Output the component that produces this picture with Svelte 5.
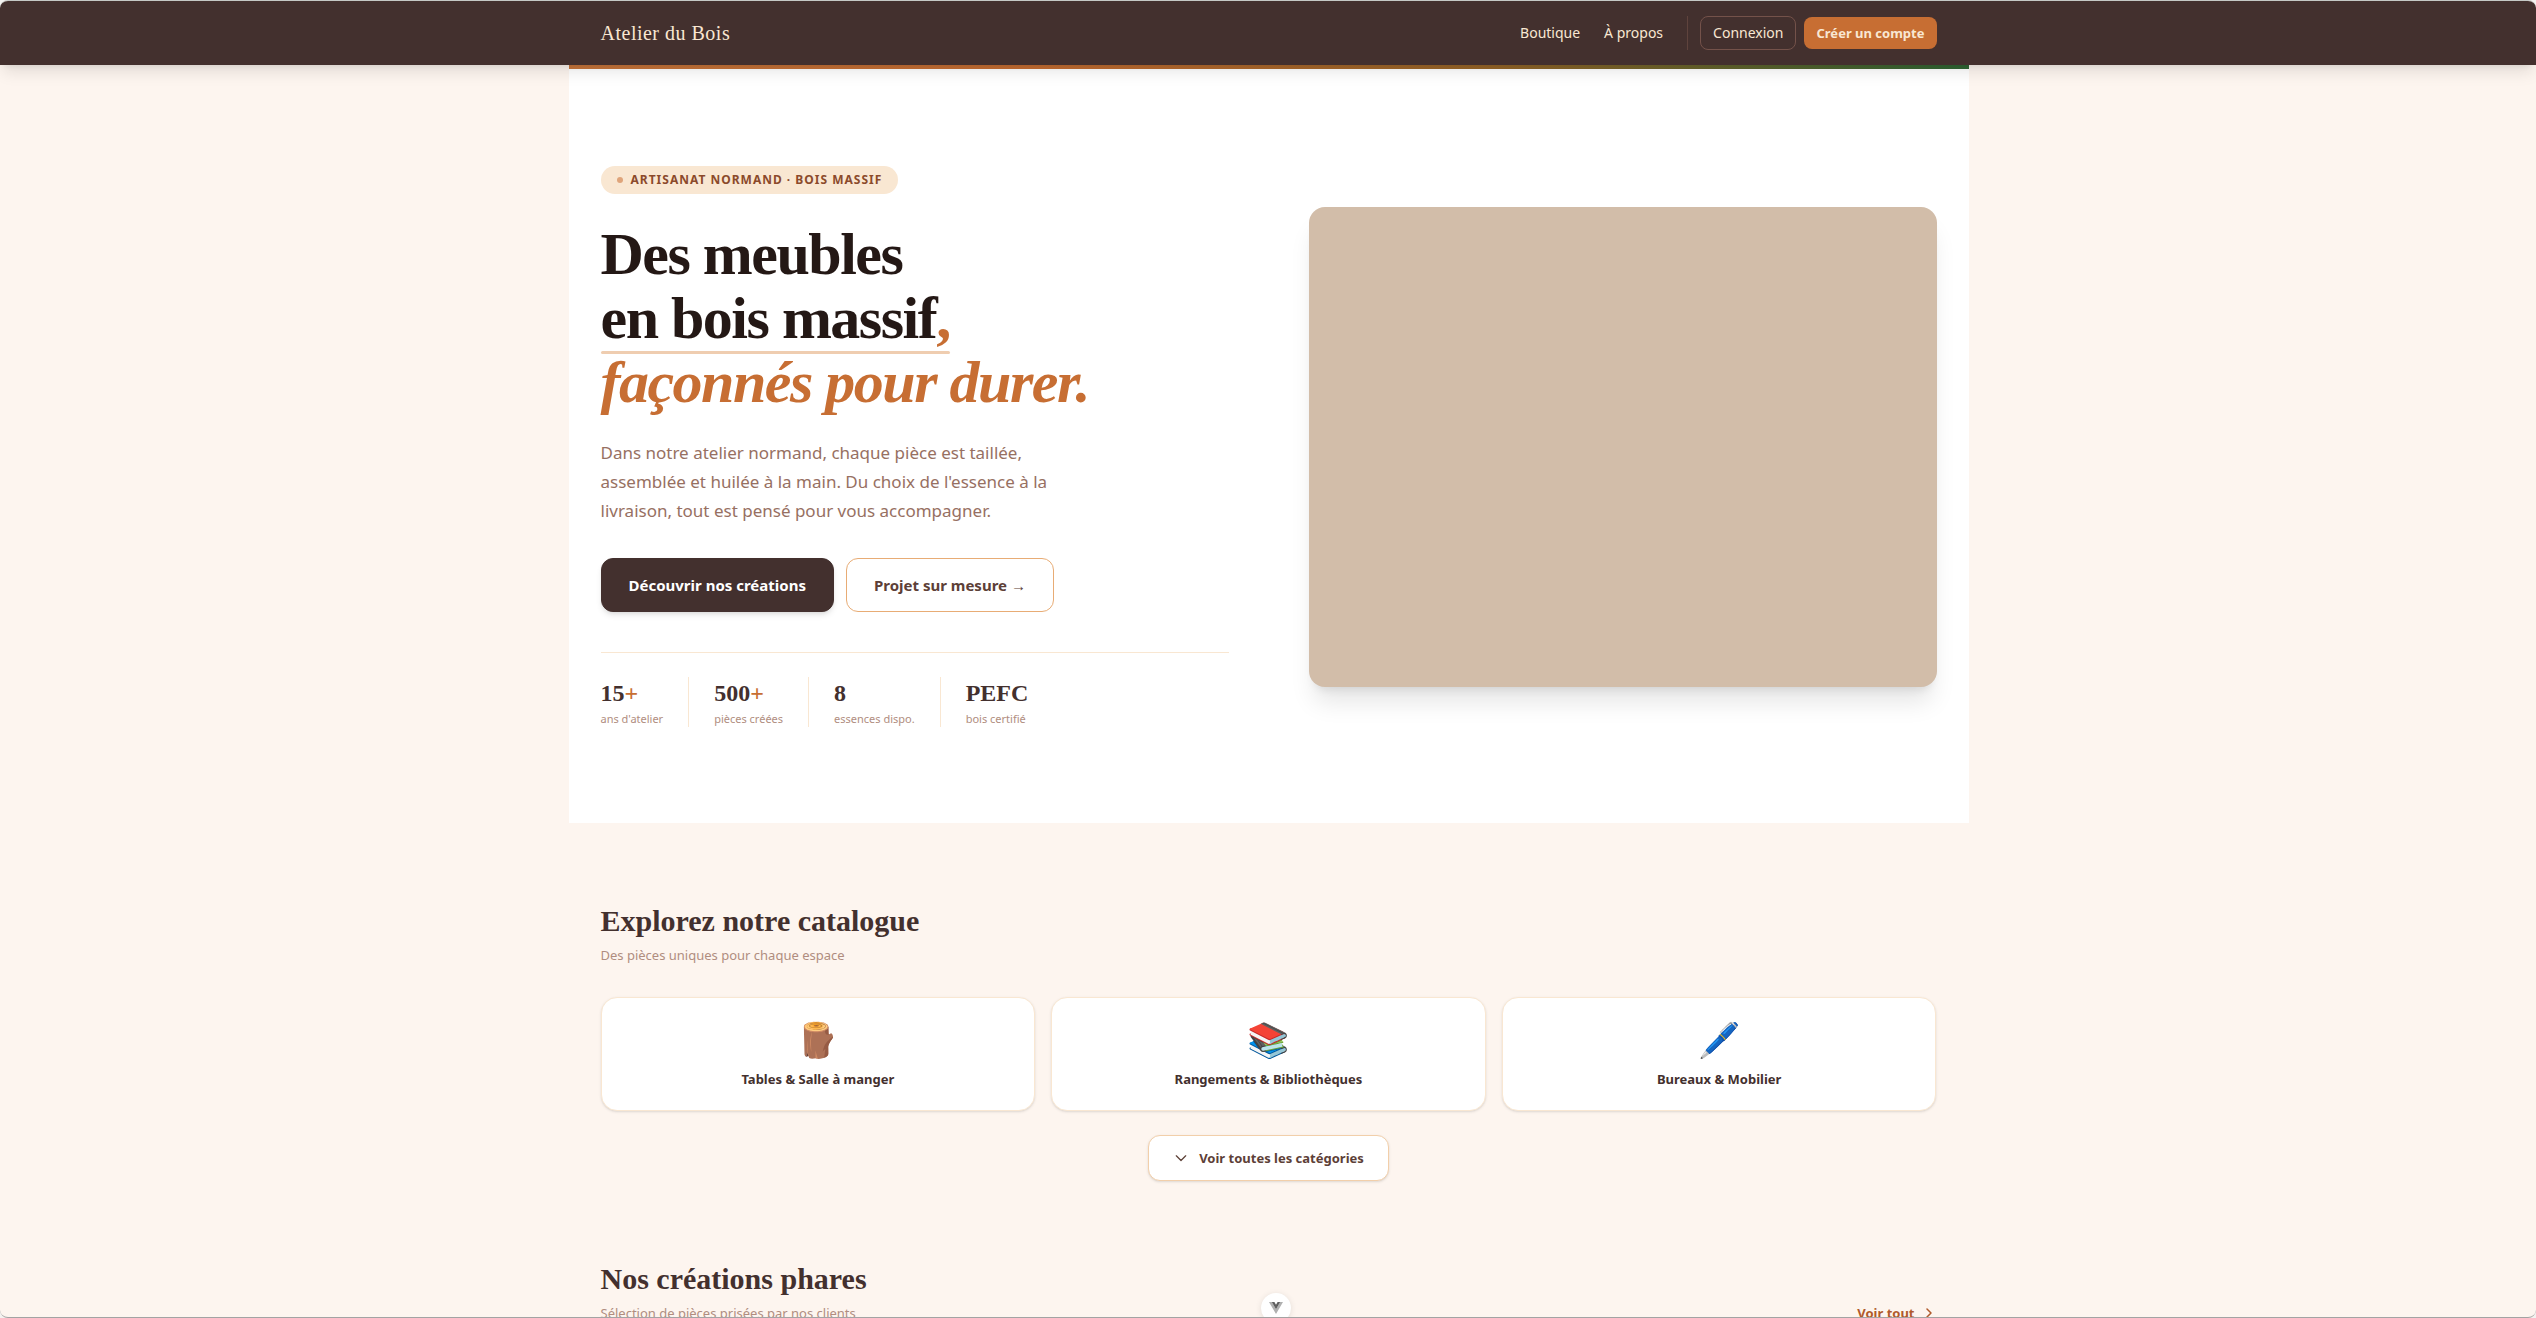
<script>
  const stats = [
    { value: '15', plus: true, label: "ans d'atelier" },
    { value: '500', plus: true, label: 'pièces créées' },
    { value: '8', plus: false, label: 'essences dispo.' },
    { value: 'PEFC', plus: false, label: 'bois certifié' }
  ];

  const categories = [
    { icon: '🪵', name: 'Tables & Salle à manger' },
    { icon: '📚', name: 'Rangements & Bibliothèques' },
    { icon: '🖊️', name: 'Bureaux & Mobilier' }
  ];
</script>

<div class="page">
  <header class="topbar">
    <div class="container bar">
      <a class="brand" href="/">Atelier du Bois</a>
      <nav class="nav">
        <a class="link" href="/boutique">Boutique</a>
        <a class="link" href="/a-propos">À propos</a>
        <div class="account">
          <a class="login" href="/connexion">Connexion</a>
          <a class="signup" href="/inscription">Créer un compte</a>
        </div>
      </nav>
    </div>
  </header>

  <main>
    <section class="hero container">
      <div class="pitch">
        <span class="badge"><span class="dot"></span>Artisanat normand · Bois massif</span>
        <h1>
          Des meubles<br />
          <span class="underlined">en bois massif<span class="accent">,</span></span><br />
          <em class="accent">façonnés pour durer.</em>
        </h1>
        <p class="lead">
          Dans notre atelier normand, chaque pièce est taillée,<br />
          assemblée et huilée à la main. Du choix de l'essence à la<br />
          livraison, tout est pensé pour vous accompagner.
        </p>
        <div class="actions">
          <a class="primary" href="/boutique">Découvrir nos créations</a>
          <a class="secondary" href="/sur-mesure">Projet sur mesure <span class="arrow">→</span></a>
        </div>
        <ul class="stats">
          {#each stats as stat}
            <li>
              <strong>{stat.value}{#if stat.plus}<span class="accent">+</span>{/if}</strong>
              <span class="label">{stat.label}</span>
            </li>
          {/each}
        </ul>
      </div>
      <div class="visual"></div>
    </section>

    <section class="block container">
      <h2>Explorez notre catalogue</h2>
      <p class="sub">Des pièces uniques pour chaque espace</p>
      <div class="cards">
        {#each categories as category}
          <a class="card" href="/boutique">
            <span class="emoji">{category.icon}</span>
            <span class="name">{category.name}</span>
          </a>
        {/each}
      </div>
      <button class="more" type="button">
        <svg width="16" height="16" viewBox="0 0 16 16" fill="none" stroke="currentColor" stroke-width="1.25" stroke-linecap="round" stroke-linejoin="round" aria-hidden="true"><path d="M3.300 5.800l4.700 4.700 4.700-4.700" /></svg>
        Voir toutes les catégories
      </button>
    </section>

    <section class="block container">
      <h2>Nos créations phares</h2>
      <div class="row">
        <p class="sub">Sélection de pièces prisées par nos clients</p>
        <a class="all" href="/boutique">
          Voir tout
          <svg width="16" height="16" viewBox="0 0 16 16" fill="none" stroke="currentColor" stroke-width="1.5" stroke-linecap="round" stroke-linejoin="round" aria-hidden="true"><path d="M6 4l4 4-4 4" /></svg>
        </a>
      </div>
    </section>
  </main>

  <button class="devtools" type="button" aria-label="Vue DevTools">
    <svg width="14" height="12" viewBox="0 0 14 12" aria-hidden="true">
      <path d="M0 0h2.800L7 7.300 11.200 0H14L7 12z" fill="#b0b0b0" />
      <path d="M2.800 0h2.600L7 2.700 8.600 0h2.600L7 7.300z" fill="#5f5f5f" />
    </svg>
  </button>
</div>

<style>
  :global(body) {
    background: #f4f2f0;
  }

  .page {
    position: relative;
    box-sizing: border-box;
    height: 100vh;
    overflow: hidden;
    border-top: 1px solid #c5c8c5;
    border-bottom: 1px solid #a3a3a3;
    border-radius: 8px;
    background: #fdf5ef;
    color: #43302e;
    font-family: 'Noto Sans', 'Open Sans', sans-serif;
    font-size: 14px;
    line-height: 20px;
  }

  a {
    color: inherit;
    text-decoration: none;
  }

  h1,
  h2,
  p,
  ul {
    margin: 0;
    padding: 0;
  }

  .container {
    box-sizing: border-box;
    max-width: 1400px;
    margin: 0 auto;
    padding: 0 32px;
  }

  .topbar,
  main {
    padding-left: 1px;
  }

  .topbar {
    position: relative;
    z-index: 1;
    background: #43302e;
    box-shadow: 0 10px 15px -3px rgb(0 0 0 / 0.1), 0 4px 6px -4px rgb(0 0 0 / 0.1);
    color: #f9e7d2;
  }

  .bar {
    display: flex;
    align-items: center;
    justify-content: space-between;
    height: 64px;
  }

  .brand {
    font-family: 'Liberation Serif', serif;
    font-size: 20px;
    letter-spacing: 0.025em;
  }

  .nav {
    display: flex;
    align-items: center;
    gap: 24px;
  }

  .account {
    display: flex;
    align-items: center;
    gap: 8px;
    padding-left: 12px;
    border-left: 1px solid #5f433d;
  }

  .login,
  .signup {
    padding: 6px 12px;
    border-radius: 8px;
  }

  .login {
    border: 1px solid #74524a;
  }

  .signup {
    background: #c76e33;
    font-size: 13px;
    font-weight: 700;
  }

  .hero {
    position: relative;
    display: grid;
    grid-template-columns: 1fr 1fr;
    align-items: center;
    gap: 80px;
    padding: 101px 32px 96px;
    background: #fff;
  }

  .hero::before {
    content: '';
    position: absolute;
    inset: 0 0 auto;
    height: 4px;
    background: linear-gradient(90deg, #c8763c, #c76e33 33%, #976628 66%, #2f6534);
  }

  .badge {
    display: inline-flex;
    align-items: center;
    gap: 8px;
    padding: 4px 16px;
    border-radius: 14px;
    background: #f9e7d2;
    color: #8b4a2b;
    font-size: 12px;
    font-weight: 700;
    letter-spacing: 1px;
    text-transform: uppercase;
  }

  .dot {
    width: 6px;
    height: 6px;
    border-radius: 50%;
    background: #dfa47a;
  }

  h1 {
    margin-top: 28px;
    color: #241815;
    font-family: 'Liberation Serif', serif;
    font-size: 60px;
    font-weight: 700;
    line-height: 64px;
    letter-spacing: -0.025em;
  }

  .accent {
    color: #c76e33;
  }

  .underlined {
    position: relative;
  }

  .underlined::after {
    content: '';
    position: absolute;
    right: 0;
    bottom: -3px;
    left: 0;
    height: 3px;
    border-radius: 2px;
    background: #efcdb0;
  }

  .lead {
    margin-top: 24px;
    color: #977062;
    font-size: 17px;
    line-height: 29px;
  }

  .actions {
    display: flex;
    gap: 12px;
    margin-top: 33px;
    font-size: 15px;
    font-weight: 700;
    line-height: 24px;
  }

  .primary,
  .secondary {
    padding: 14px 27px;
    border: 1px solid #43302e;
    border-radius: 12px;
  }

  .primary {
    background: #43302e;
    box-shadow: 0 4px 6px -1px rgb(0 0 0 / 0.1), 0 2px 4px -2px rgb(0 0 0 / 0.1);
    color: #fff;
  }

  .secondary {
    border-color: #e8ac75;
    color: #5d4037;
  }

  .stats {
    display: flex;
    margin-top: 40px;
    padding-top: 24px;
    border-top: 1px solid #f9e7d2;
    list-style: none;
  }

  .stats li {
    display: flex;
    flex-direction: column;
    gap: 2px;
    padding: 0 25px;
    border-left: 1px solid #f9e7d2;
  }

  .stats li:first-child {
    padding-left: 0;
    border-left: 0;
  }

  .stats strong {
    font-family: 'Liberation Serif', serif;
    font-size: 24px;
    line-height: 32px;
  }

  .label {
    color: #b08d80;
    font-size: 11px;
    line-height: 16px;
  }

  .visual {
    height: 480px;
    border-radius: 16px;
    background: #d2bda9;
    box-shadow: 0 20px 25px -5px rgb(0 0 0 / 0.1), 0 8px 10px -6px rgb(0 0 0 / 0.1);
  }

  .block {
    padding-top: 80px;
  }

  h2 {
    font-family: 'Liberation Serif', serif;
    font-size: 30px;
    line-height: 36px;
  }

  .sub {
    margin-top: 6px;
    color: #b08d80;
    font-size: 13px;
  }

  .cards {
    display: grid;
    grid-template-columns: repeat(3, 1fr);
    gap: 16px;
    margin-top: 32px;
  }

  .card {
    display: flex;
    flex-direction: column;
    align-items: center;
    gap: 8px;
    padding: 21px 16px;
    border: 1px solid #f9e7d2;
    border-radius: 16px;
    background: #fff;
    box-shadow: 0 1px 3px rgb(0 0 0 / 0.1), 0 1px 2px -1px rgb(0 0 0 / 0.1);
  }

  .emoji {
    font-family: 'Noto Color Emoji', sans-serif;
    font-size: 34px;
    line-height: 42px;
  }

  .name {
    font-size: 13px;
    font-weight: 700;
  }

  .more {
    display: flex;
    align-items: center;
    gap: 10px;
    margin: 24px auto 0;
    padding: 12px 24px;
    border: 1px solid #f2cfaa;
    border-radius: 12px;
    background: #fff;
    box-shadow: 0 1px 3px rgb(0 0 0 / 0.1), 0 1px 2px -1px rgb(0 0 0 / 0.1);
    color: #5d4037;
    font: inherit;
    font-size: 13px;
    font-weight: 700;
  }

  .row {
    display: flex;
    align-items: flex-end;
    justify-content: space-between;
  }

  .all {
    display: flex;
    align-items: center;
    gap: 6px;
    color: #b05a2b;
    font-size: 13px;
    font-weight: 700;
  }

  .devtools {
    position: absolute;
    bottom: -6px;
    left: calc(50% + 8px);
    display: grid;
    place-items: center;
    width: 30px;
    height: 30px;
    margin-left: -15px;
    padding: 0;
    border: 0;
    border-radius: 50%;
    background: #fff;
    box-shadow: 0 1px 6px rgb(0 0 0 / 0.1);
  }
</style>
